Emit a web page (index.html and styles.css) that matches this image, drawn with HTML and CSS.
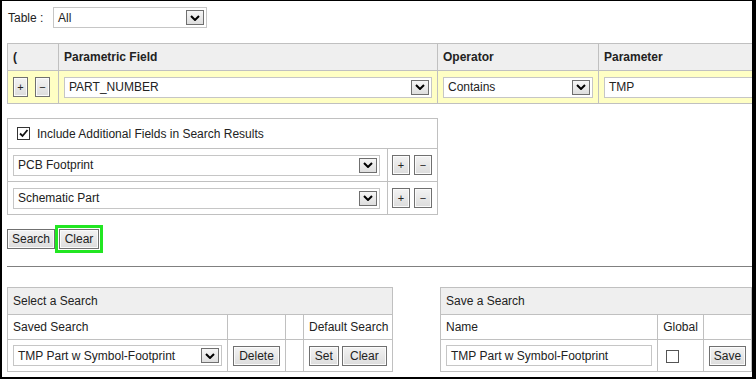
FILE: index.html
```html
<!DOCTYPE html>
<html lang="en">
<head>
    <meta charset="UTF-8">
    <meta name="viewport" content="width=device-width, initial-scale=1.0">
    <title>Parametric Search</title>
    <link rel="stylesheet" href="styles.css">
</head>
<body>
    <div class="frame">
        <div class="table-pick">
            <span class="label">Table :</span>
            <div class="select sel-table"><span class="val">All</span><span class="arrow"><svg viewBox="0 0 10 6"><path d="M1 1 L5 5 L9 1"/></svg></span></div>
        </div>

        <table class="grid criteria">
            <colgroup>
                <col style="width:51px">
                <col style="width:379px">
                <col style="width:161px">
                <col style="width:170px">
            </colgroup>
            <tr class="head">
                <th>(</th>
                <th>Parametric Field</th>
                <th>Operator</th>
                <th>Parameter</th>
            </tr>
            <tr class="edit">
                <td><div class="pair"><button class="btn sm">+</button><button class="btn sm">&minus;</button></div></td>
                <td><div class="select"><span class="val">PART_NUMBER</span><span class="arrow"><svg viewBox="0 0 10 6"><path d="M1 1 L5 5 L9 1"/></svg></span></div></td>
                <td><div class="select"><span class="val">Contains</span><span class="arrow"><svg viewBox="0 0 10 6"><path d="M1 1 L5 5 L9 1"/></svg></span></div></td>
                <td><div class="text-in">TMP</div></td>
            </tr>
        </table>

        <table class="grid extra">
            <colgroup>
                <col style="width:380px">
                <col style="width:50px">
            </colgroup>
            <tr class="check-row">
                <td colspan="2"><label class="check"><span class="box on"><svg viewBox="0 0 11 11"><path d="M2 5.5 L4.5 8 L9.5 2"/></svg></span>Include Additional Fields in Search Results</label></td>
            </tr>
            <tr class="field-row">
                <td class="sel-cell"><div class="select"><span class="val">PCB Footprint</span><span class="arrow"><svg viewBox="0 0 10 6"><path d="M1 1 L5 5 L9 1"/></svg></span></div></td>
                <td class="btn-cell"><div class="pair tight"><button class="btn md">+</button><button class="btn md">&minus;</button></div></td>
            </tr>
            <tr class="field-row">
                <td class="sel-cell"><div class="select"><span class="val">Schematic Part</span><span class="arrow"><svg viewBox="0 0 10 6"><path d="M1 1 L5 5 L9 1"/></svg></span></div></td>
                <td class="btn-cell"><div class="pair tight"><button class="btn md">+</button><button class="btn md">&minus;</button></div></td>
            </tr>
        </table>

        <div class="actions">
            <button class="btn">Search</button>
            <button class="btn focus">Clear</button>
        </div>

        <div class="rule"></div>

        <div class="saved">
            <table class="grid pick">
                <colgroup>
                    <col style="width:220px">
                    <col style="width:58px">
                    <col style="width:18px">
                    <col style="width:89px">
                </colgroup>
                <tr class="head">
                    <th colspan="4">Select a Search</th>
                </tr>
                <tr class="sub">
                    <td>Saved Search</td>
                    <td></td>
                    <td></td>
                    <td>Default Search</td>
                </tr>
                <tr class="ctl">
                    <td><div class="select"><span class="val">TMP Part w Symbol-Footprint</span><span class="arrow"><svg viewBox="0 0 10 6"><path d="M1 1 L5 5 L9 1"/></svg></span></div></td>
                    <td><button class="btn del">Delete</button></td>
                    <td></td>
                    <td><div class="pair narrow"><button class="btn set">Set</button><button class="btn clr">Clear</button></div></td>
                </tr>
            </table>

            <table class="grid store">
                <colgroup>
                    <col style="width:217px">
                    <col style="width:46px">
                    <col style="width:48px">
                </colgroup>
                <tr class="head">
                    <th colspan="3">Save a Search</th>
                </tr>
                <tr class="sub">
                    <td>Name</td>
                    <td class="mid">Global</td>
                    <td></td>
                </tr>
                <tr class="ctl">
                    <td><div class="text-in">TMP Part w Symbol-Footprint</div></td>
                    <td class="glob"><span class="box"></span></td>
                    <td><button class="btn">Save</button></td>
                </tr>
            </table>
        </div>
    </div>
</body>
</html>
```

FILE: styles.css
```css
* {
    box-sizing: border-box;
}
body {
    margin: 0;
    font-family: "Liberation Sans", Arial, sans-serif;
    font-size: 12px;
    color: #222;
    background-color: #fff;
}
.frame {
    width: 756px;
    height: 379px;
    border-top: 1px solid #000;
    border-left: 2px solid #000;
    border-right: 4px solid #000;
    border-bottom: 2px solid #000;
    padding: 6px 0 0 5px;
    overflow: hidden;
}
.table-pick {
    display: flex;
    align-items: center;
    height: 21px;
}
.label {
    width: 46px;
    padding-left: 1px;
}
.sel-table {
    width: 154px;
}

/* fake form controls */
.select {
    display: flex;
    align-items: center;
    height: 21px;
    border: 1px solid #c6c6c6;
    background-color: #fff;
    padding: 0 2px 0 4px;
}
.select .val {
    flex: 1;
    white-space: nowrap;
}
.arrow {
    width: 18px;
    height: 15px;
    border: 1px solid #6f6f6f;
    background: linear-gradient(#f6f6f6, #dedede);
    display: flex;
    align-items: center;
    justify-content: center;
}
.arrow svg {
    width: 10px;
    height: 6px;
}
.arrow path {
    fill: none;
    stroke: #000;
    stroke-width: 2;
}
.text-in {
    height: 21px;
    border: 1px solid #c6c6c6;
    background-color: #fff;
    padding: 0 4px;
    display: flex;
    align-items: center;
    white-space: nowrap;
}
.btn {
    font-family: "Liberation Sans", Arial, sans-serif;
    font-size: 12px;
    color: #222;
    height: 20px;
    padding: 0 4px;
    border: 1px solid #707070;
    box-shadow: inset 0 0 0 1px #fbfbfb;
    background: linear-gradient(#f3f3f3, #dcdcdc);
    border-radius: 0;
    margin: 0;
}
.btn.sm {
    width: 15px;
    padding: 0;
    font-size: 11px;
}
.btn.md {
    width: 18px;
    padding: 0;
    font-size: 11px;
}
.pair {
    display: flex;
    gap: 7px;
}
.pair.tight {
    gap: 4px;
}
.pair.narrow {
    gap: 3px;
}

/* tables */
.grid {
    border-collapse: separate;
    border-spacing: 0;
    table-layout: fixed;
    border-top: 1px solid #c0c0c0;
    border-left: 1px solid #c0c0c0;
}
.grid th,
.grid td {
    border-right: 1px solid #c0c0c0;
    border-bottom: 1px solid #c0c0c0;
    padding: 0 5px;
    text-align: left;
    vertical-align: middle;
    white-space: nowrap;
}
.grid .head th {
    background-color: #efefef;
}
.criteria {
    width: 762px;
    margin-top: 15px;
}
.criteria .head th {
    height: 27px;
    font-weight: bold;
}
.criteria .edit td {
    height: 33px;
    background-color: #ffffc4;
}
.criteria .edit td:last-child {
    padding-right: 0;
}

.extra {
    width: 431px;
    margin-top: 14px;
}
.check-row td {
    height: 30px;
    padding-left: 9px;
}
.field-row td {
    height: 33px;
}
.field-row .sel-cell {
    padding-right: 7px;
}
.field-row .btn-cell {
    padding: 0 4px;
}
.check {
    display: flex;
    align-items: center;
    gap: 7px;
}
.box {
    display: inline-block;
    width: 13px;
    height: 13px;
    border: 1px solid #555;
    background-color: #fff;
    vertical-align: middle;
}
.box.on {
    border-color: #333;
}
.box svg {
    display: block;
    width: 11px;
    height: 11px;
}
.box path {
    fill: none;
    stroke: #111;
    stroke-width: 1.8;
}

.actions {
    display: flex;
    gap: 4px;
    margin-top: 14px;
}
.actions .btn:first-child {
    width: 48px;
}
.actions .focus {
    width: 40px;
    box-shadow: inset 0 0 0 1px #fbfbfb, 0 0 0 1px #fff, 0 0 0 4px #22e622;
}
.rule {
    height: 1px;
    background-color: #808080;
    margin: 17px 0 0 0;
    width: 745px;
}

.saved {
    display: flex;
    align-items: flex-start;
    gap: 47px;
    margin-top: 20px;
}
.pick {
    width: 386px;
}
.store {
    width: 312px;
}
.saved .head th {
    height: 27px;
    font-weight: normal;
}
.saved .sub td {
    height: 25px;
}
.saved .ctl td {
    height: 32px;
}
.saved .mid {
    text-align: center;
}
.saved .glob {
    padding-left: 8px;
}
.pick .del {
    width: 47px;
}
.pick .set {
    width: 30px;
    padding: 0;
}
.pick .clr {
    width: 46px;
    padding: 0;
}
.store .ctl .btn {
    width: 37px;
    padding: 0;
}
```
